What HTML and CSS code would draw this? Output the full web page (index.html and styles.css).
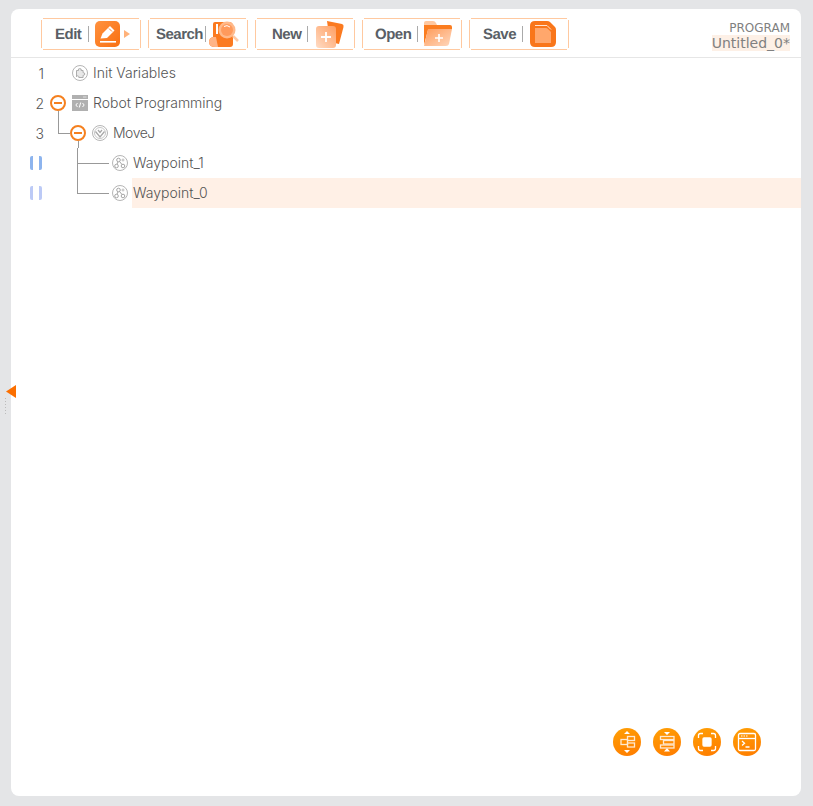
FILE: index.html
```html
<!DOCTYPE html>
<html lang="en">
<head>
<meta charset="utf-8">
<title>Program</title>
<link rel="stylesheet" href="styles.css">
</head>
<body>
<main class="panel">
  <header class="toolbar">
    <div class="tools">
      <button class="tool tool-edit"><span class="tool-label">Edit</span><i class="sep"></i>
        <svg class="ico" width="25" height="26" viewBox="0 0 25 26"><defs><linearGradient id="ge" x1="0" y1="0" x2="1" y2="1"><stop offset="0" stop-color="#ff9240"/><stop offset="1" stop-color="#f96f10"/></linearGradient></defs><rect width="25" height="26" rx="5" fill="url(#ge)"/><path d="M5.500 17.500 L7.500 12.500 L15 5 L19.500 9.500 L12 17 Z" fill="#fff"/><path d="M14 7.500 L17 10.500" stroke="#f98030" stroke-width="1"/><rect x="5" y="20" width="16" height="1.600" fill="#fff"/></svg>
        <svg class="caret" width="6" height="8" viewBox="0 0 6 8"><path d="M0 0 L6 4 L0 8 Z" fill="#ffb27a"/></svg>
      </button>
      <button class="tool tool-search"><span class="tool-label">Search</span><i class="sep"></i>
        <svg class="ico" width="31" height="27" viewBox="0 0 31 27"><path d="M4 3 Q4 1 6 1 L20 1 Q24 1 24 5 L24 23 Q24 26 21 26 L6 26 Q0 26 0 21 Q0 17 4 16 Z" fill="#fb7a20"/><path d="M0 21 Q0 17 4 16 L7 16 L9 26 L6 26 Q0 26 0 21Z" fill="#ffb486"/><rect x="7" y="3" width="2" height="10" fill="#fff"/><circle cx="18" cy="9" r="8.500" fill="#ffb98a"/><circle cx="18" cy="9" r="6" fill="#ff9a5c"/><path d="M15 5.500 Q18 3.500 21 6" stroke="#fff" stroke-width="1" fill="none"/><path d="M24 15 L29 20" stroke="#ffc9a4" stroke-width="2.500"/></svg>
      </button>
      <button class="tool tool-new"><span class="tool-label">New</span><i class="sep"></i>
        <svg class="ico" width="28" height="27" viewBox="0 0 28 27"><defs><linearGradient id="gn" x1="1" y1="0" x2="0" y2="1"><stop offset="0" stop-color="#ff9f62"/><stop offset="1" stop-color="#ffdcc5"/></linearGradient></defs><path d="M11 0 L26 3 Q28 3.500 27.500 6 L23 23 L14 21 Z" fill="#fb7a20"/><rect x="0" y="5" width="20" height="22" rx="3" fill="url(#gn)"/><path d="M10 11 V21 M5 16 H15" stroke="#fff" stroke-width="1.800"/></svg>
      </button>
      <button class="tool tool-open"><span class="tool-label">Open</span><i class="sep"></i>
        <svg class="ico" width="28" height="26" viewBox="0 0 28 26"><defs><linearGradient id="go" x1="0" y1="0" x2="1" y2="1"><stop offset="0" stop-color="#ff9c5a"/><stop offset="1" stop-color="#ffd7bd"/></linearGradient></defs><path d="M0 2 Q0 0 2 0 L9 0 Q11 0 12 2 L13 4 L0 4 Z" fill="#ffc8a0"/><path d="M0 4 L26 4 Q28 4 28 6 L28 8 L4 9 L0 24 Z" fill="#fb7d20"/><path d="M4 8 L28 8 L25 23 Q24.500 25 22 25 L0 25 Z" fill="url(#go)"/><path d="M15 13 V21 M11 17 H19" stroke="#fff" stroke-width="1.600"/></svg>
      </button>
      <button class="tool tool-save"><span class="tool-label">Save</span><i class="sep"></i>
        <svg class="ico" width="26" height="26" viewBox="0 0 26 26"><path d="M5 0 H17 Q19 0 20 1 L25 6 Q26 7 26 9 V21 Q26 26 21 26 H5 Q0 26 0 21 V5 Q0 0 5 0Z" fill="#f9761a"/><path d="M5 4.500 H17 L21 8.500" stroke="#ffe3d0" stroke-width="1" fill="none"/><path d="M5 7 H16 Q17 7 18 8 L21 11 V22 H5 Z" fill="#ffa76c"/></svg>
      </button>
    </div>
    <div class="doc">
      <span class="doc-kind">PROGRAM</span>
      <span class="doc-name">Untitled_0*</span>
    </div>
  </header>

  <section class="tree">
    <div class="row">
      <span class="gutter"><span class="num">1</span></span>
      <div class="node d0">
        <svg class="icon" width="16" height="16" viewBox="0 0 16 16"><circle cx="8" cy="8" r="7.500" fill="none" stroke="#b5b5b5"/><path d="M4.500 5.500h2a1.400 1.400 0 1 1 2.600 0h2v2.200h.4a1.300 1.300 0 0 1 0 2.600h-.4v2.200H6.800v-.8a1.200 1.200 0 0 0-2.300 0Z" fill="#e8e8e8" stroke="#a5a5a5" stroke-width=".9"/></svg>
        <span class="label">Init Variables</span>
      </div>
    </div>
    <div class="row">
      <span class="gutter"><span class="num">2</span></span>
      <div class="node d0t">
        <span class="toggle"></span>
        <svg class="icon" width="16" height="16" viewBox="0 0 16 16"><rect width="16" height="16" fill="#b0b0b0"/><rect x="0" y="4" width="16" height="1" fill="#fff"/><path d="M11 2h3.500" stroke="#ddd"/><path d="M5.500 8 L3.800 10 L5.500 12 M10.500 8 L12.200 10 L10.500 12 M8.700 7.500 L7.300 12.500" stroke="#fff" fill="none"/></svg>
        <span class="label">Robot Programming</span>
      </div>
      <i class="link link-v link-a"></i>
    </div>
    <div class="row">
      <span class="gutter"><span class="num">3</span></span>
      <div class="node d1t">
        <span class="toggle"></span>
        <svg class="icon" width="16" height="16" viewBox="0 0 16 16"><circle cx="8" cy="8" r="7.500" fill="none" stroke="#b5b5b5"/><circle cx="8" cy="8" r="5.500" fill="none" stroke="#c8c8c8"/><path d="M3.500 6.500 L8 12 L12.500 6.500 M6 5 L8 7.500 L10 5" stroke="#a8a8a8" fill="none" stroke-width="1.300"/></svg>
        <span class="label label-tight">MoveJ</span>
      </div>
      <i class="link link-h link-b"></i>
      <i class="link link-v link-c"></i>
    </div>
    <div class="row">
      <span class="gutter"><span class="pause"></span></span>
      <div class="node d2">
        <svg class="icon" width="16" height="16" viewBox="0 0 16 16"><circle cx="8" cy="8" r="7.500" fill="none" stroke="#b5b5b5"/><circle cx="6.500" cy="5" r="1.800" fill="none" stroke="#a5a5a5"/><circle cx="4.500" cy="11" r="1.800" fill="none" stroke="#a5a5a5"/><circle cx="11" cy="11" r="1.800" fill="none" stroke="#a5a5a5"/><path d="M6 6.800 L5 9.200 M7.500 6.500 L10 9.500" stroke="#a5a5a5"/><path d="M11 3.500v3M9.500 5h3" stroke="#bbb"/></svg>
        <span class="label">Waypoint_1</span>
      </div>
      <i class="link link-v link-d"></i>
      <i class="link link-h link-e"></i>
    </div>
    <div class="row">
      <span class="gutter"><span class="pause pause-faded"></span></span>
      <div class="node d2">
        <svg class="icon" width="16" height="16" viewBox="0 0 16 16"><circle cx="8" cy="8" r="7.500" fill="none" stroke="#b5b5b5"/><circle cx="6.500" cy="5" r="1.800" fill="none" stroke="#a5a5a5"/><circle cx="4.500" cy="11" r="1.800" fill="none" stroke="#a5a5a5"/><circle cx="11" cy="11" r="1.800" fill="none" stroke="#a5a5a5"/><path d="M6 6.800 L5 9.200 M7.500 6.500 L10 9.500" stroke="#a5a5a5"/><path d="M11 3.500v3M9.500 5h3" stroke="#bbb"/></svg>
        <span class="label label-selected">Waypoint_0</span>
      </div>
      <i class="link link-v link-f"></i>
      <i class="link link-h link-e"></i>
    </div>
  </section>

  <div class="fabs">
    <button class="fab"><svg width="28" height="28" viewBox="0 0 28 28" fill="none" stroke="#ffe9d0" stroke-width="1.300"><path d="M14 3 L17 6 H11Z M14 25 L11 22 H17Z" fill="#fff" stroke="none"/><rect x="8" y="11.500" width="6.500" height="5"/><rect x="14.500" y="8.500" width="7" height="4"/><rect x="14.500" y="15" width="7" height="4"/></svg></button>
    <button class="fab"><svg width="28" height="28" viewBox="0 0 28 28" fill="none" stroke="#ffe9d0" stroke-width="1.300"><path d="M14 7 L11 4 H17Z M14 20 L17 23.500 H11Z" fill="#fff" stroke="none"/><rect x="7.500" y="8.500" width="13.500" height="3"/><rect x="10.500" y="12.500" width="10.500" height="3.500"/><rect x="7.500" y="17" width="13.500" height="3"/></svg></button>
    <button class="fab"><svg width="28" height="28" viewBox="0 0 28 28" fill="none" stroke="#fff" stroke-width="1.300"><rect x="10" y="10" width="8" height="8" rx="1" fill="#fff"/><path d="M5.500 10 V7.500 Q5.500 5.500 7.500 5.500 H10 M18 5.500 H20.500 Q22.500 5.500 22.500 7.500 V10 M22.500 18 V20.500 Q22.500 22.500 20.500 22.500 H18 M10 22.500 H7.500 Q5.500 22.500 5.500 20.500 V18"/></svg></button>
    <button class="fab"><svg width="28" height="28" viewBox="0 0 28 28" fill="none" stroke="#fff" stroke-width="1.300"><rect x="5.500" y="5.500" width="17" height="17" rx="1.500"/><path d="M5.500 10.500 H22.500"/><path d="M8 8h1.500M10.500 8h1.500M13 8h1.500" stroke-width="1"/><path d="M9 13 L11.500 15.200 L9 17.400 M12.500 19 H16.500"/></svg></button>
  </div>
</main>
<div class="handle">
  <svg width="10" height="13" viewBox="0 0 10 13"><path d="M0 6.500 L10 0 V13 Z" fill="#fb6f00"/></svg>
  <span class="grip"></span>
</div>
</body>
</html>
```

FILE: styles.css
```css
* { box-sizing: border-box; }
html, body { height: 100%; }
body {
  margin: 0;
  background: #e4e5e7;
  padding: 9px 12px 10px 11px;
  font-family: Inter, "Liberation Sans", sans-serif;
  color: #666;
  overflow: hidden;
}
.panel {
  position: relative;
  height: 787px;
  background: #fff;
  border-radius: 8px;
}
.toolbar {
  display: flex;
  justify-content: space-between;
  align-items: flex-start;
  height: 49px;
  border-bottom: 1px solid #e6e6e6;
  padding: 9px 11px 0 30px;
}
.tools { display: flex; gap: 7px; }
.tool {
  position: relative;
  display: flex;
  align-items: center;
  width: 100px;
  height: 32px;
  margin: 0;
  background: none;
  border: 0;
  font: bold 15px "Liberation Sans", Arial, sans-serif;
  letter-spacing: -0.5px;
  color: #5a5f66;
  text-rendering: geometricPrecision;
}
.tool::before {
  content: "";
  position: absolute;
  inset: 0 2px;
  border-top: 1px solid #ffc9a0;
  border-bottom: 1px solid #ffc9a0;
}
.tool::after {
  content: "";
  position: absolute;
  inset: 2px 0;
  border-left: 1px solid #ffc9a0;
  border-right: 1px solid #ffc9a0;
}
.tool-edit { padding: 0 0 0 14px; }
.tool-search { padding: 0 0 0 8px; }
.tool-new { padding: 0 0 0 17px; }
.tool-open { padding: 0 0 0 13px; }
.tool-save { padding: 0 0 0 14px; }
.sep { width: 1px; height: 16px; background: #aaa; margin: 0 6px; }
.tool-edit .sep { margin: 0 6px 0 7px; }
.tool-search .sep { margin: 0 3px 0 2px; }
.tool-new .sep { margin: 0 8px 0 6px; }
.tool-save .sep { margin: 0 7px 0 6px; }
.ico { flex: none; }
.caret { margin-left: 4px; }
.doc { display: flex; flex-direction: column; align-items: flex-end; margin-top: 3px; }
.doc-kind { font: 12px/14px "DejaVu Sans", sans-serif; color: #808080; }
.doc-name { font: 14px/16px "DejaVu Sans", sans-serif; color: #808080; background: #fdf0e6; }

.row { position: relative; display: flex; align-items: center; height: 30px; }
.gutter { flex: none; width: 34px; display: flex; justify-content: flex-end; }
.num { font-size: 14px; font-weight: 300; color: #555; margin-right: 1px; }
.pause {
  display: block;
  width: 12px;
  height: 14px;
  margin-right: 3px;
  border-left: 3px solid #8db4ee;
  border-right: 3px solid #8db4ee;
  border-radius: 2px;
}
.pause-faded { border-color: #bccaf6; }
.node { flex: 1; display: flex; align-items: center; height: 30px; }
.d0 { margin-left: 27px; }
.d0t { margin-left: 5px; }
.d1t { margin-left: 25px; }
.d2 { margin-left: 67px; }
.toggle {
  position: relative;
  flex: none;
  width: 16px;
  height: 16px;
  margin-right: 6px;
  border: 2px solid #f5801f;
  border-radius: 50%;
}
.toggle::after {
  content: "";
  position: absolute;
  left: 2px;
  right: 2px;
  top: 5px;
  height: 2px;
  background: #f5801f;
}
.icon { flex: none; margin-right: 4px; }
.label {
  flex: 1;
  height: 30px;
  padding-left: 1px;
  font-size: 14px;
  font-weight: 300;
  line-height: 30px;
  color: #555;
}
.label-tight { letter-spacing: -0.5px; }
.label-selected { background: #fff0e6; }
.link { position: absolute; background: #999; }
.link-v { width: 1px; }
.link-h { height: 1px; }
.link-a { left: 47px; top: 23px; height: 23px; }
.link-b { left: 47px; top: 15px; width: 12px; }
.link-c { left: 67px; top: 23px; height: 7px; }
.link-d { left: 66px; top: 0; height: 30px; }
.link-f { left: 66px; top: 0; height: 16px; }
.link-e { left: 66px; top: 15px; width: 32px; }

.fabs { position: absolute; right: 40px; bottom: 40px; display: flex; gap: 12px; }
.fab {
  width: 28px;
  height: 28px;
  padding: 0;
  border: 0;
  border-radius: 50%;
  background: linear-gradient(160deg, #ffa005, #ff7b00);
}
.fab svg { display: block; }
.handle { position: absolute; left: 6px; top: 385px; }
.handle svg { display: block; }
.grip {
  position: absolute;
  left: -1px;
  top: 13px;
  width: 1px;
  height: 16px;
  background: repeating-linear-gradient(#bbb 0 1px, transparent 1px 3px);
}
```
